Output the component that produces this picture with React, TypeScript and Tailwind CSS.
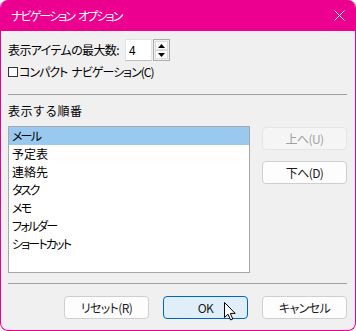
import React from 'react';

const items = ['メール', '予定表', '連絡先', 'タスク', 'メモ', 'フォルダー', 'ショートカット'];

const font = "font-['Noto_Sans_CJK_JP','Noto_Sans',sans-serif]";
const kana = "[font-feature-settings:'palt']";

const Cursor = () => (
  <svg width="13" height="19" viewBox="0 0 13 19" className="absolute left-[60px] top-[5px]">
    <path
      d="M0.5 0.5 L0.5 15.5 L4 12.2 L6.6 18 L8.8 17 L6.3 11.4 L11.2 11.4 Z"
      fill="#fff"
      stroke="#000"
      strokeWidth="1"
      strokeLinejoin="round"
    />
  </svg>
);

const Spinner = () => (
  <div className="ml-[1px] flex h-[22px] w-[17px] flex-col border border-[#adadad] bg-[#f0f0f0] p-[1px]">
    <div className="flex flex-1 items-center justify-center border border-[#dcdcdc] bg-[#fdfdfd]">
      <svg width="7" height="4" viewBox="0 0 7 4">
        <path d="M0 4 L3.5 0 L7 4 Z" fill="#000" />
      </svg>
    </div>
    <div className="flex flex-1 items-center justify-center border border-[#dcdcdc] bg-[#fdfdfd]">
      <svg width="7" height="4" viewBox="0 0 7 4">
        <path d="M0 0 L7 0 L3.5 4 Z" fill="#000" />
      </svg>
    </div>
  </div>
);

const Btn = ({
  label,
  disabled,
  primary,
  children,
}: {
  label: string;
  disabled?: boolean;
  primary?: boolean;
  children?: React.ReactNode;
}) => (
  <div
    className={
      'relative flex h-[23px] w-[85px] items-center justify-center rounded-[4px] border text-[12px] ' +
      (primary
        ? 'border-[#0067c0] bg-[#e0eef9] text-[#1a1a1a]'
        : disabled
          ? 'border-[#e5e5e5] bg-[#f5f5f5] text-[#a0a0a0]'
          : 'border-[#cfcfcf] bg-[#fdfdfd] text-[#1a1a1a]')
    }
  >
    <span className={kana + ' tracking-[-0.6px]'}>{label}</span>
    {children}
  </div>
);

export default function App() {
  return (
    <div className={'h-[331px] w-[356px] bg-white ' + font}>
      <div className="flex h-full flex-col overflow-hidden rounded-[8px] border border-t-0 border-[#ec008f] bg-[#f0f0f0]">
        <div className="flex h-[31px] shrink-0 items-center justify-between bg-[#ec008f] pl-[10px] pr-[10px] text-[12px] text-white">
          <div className={kana + ' flex gap-[4px] tracking-[-1.9px]'}>
            <span>ナビゲーション</span>
            <span>オプション</span>
          </div>
          <svg width="11" height="11" viewBox="0 0 11 11">
            <path d="M0.5 0.5 L10.5 10.5 M10.5 0.5 L0.5 10.5" stroke="#fff" strokeWidth="1" />
          </svg>
        </div>

        <div className="flex flex-1 flex-col pl-[7px] pr-[8px] text-[12px] text-black">
          <div className="mt-[8px] flex h-[22px] items-center">
            <span className={kana + ' w-[117px] shrink-0 whitespace-nowrap tracking-[-0.6px]'}>
              表示アイテムの最大数:
            </span>
            <div className="flex h-[22px] w-[27px] items-center border border-[#e3e3e3] border-b-[#bdbdbd] bg-white pl-[3px]">
              4
            </div>
            <Spinner />
          </div>

          <div className="mt-[4px] flex h-[14px] items-center">
            <div className="h-[10px] w-[10px] border border-[#333] bg-white" />
            <div className={kana + ' ml-[1px] flex gap-[4px] whitespace-nowrap tracking-[-1px]'}>
              <span>コンパクト</span>
              <span>ナビゲーション(C)</span>
            </div>
          </div>

          <div className="mt-[15px] h-px bg-[#a0a0a0]" />

          <div className="mt-[8px] h-[16px] leading-[16px] tracking-[0.4px]">表示する順番</div>

          <div className="mt-[7px] flex">
            <div className="h-[147px] w-[242px] border border-[#a8a8a8] bg-white">
              {items.map((it, i) => (
                <div
                  key={it}
                  className={
                    'flex h-[18px] items-center pl-[3px] ' + (i === 0 ? 'bg-[#99c9ef]' : '')
                  }
                >
                  <span className={i === 1 || i === 2 ? '' : kana + ' tracking-[-1.8px]'}>{it}</span>
                </div>
              ))}
            </div>
            <div className="ml-[12px] mt-[1px] flex flex-col gap-[11px]">
              <Btn label="上へ(U)" disabled />
              <Btn label="下へ(D)" />
            </div>
          </div>

          <div className="mt-[10px] h-px bg-[#a0a0a0]" />

          <div className="mt-[12px] flex justify-end gap-[14px]">
            <Btn label="リセット(R)" />
            <Btn label="OK" primary>
              <Cursor />
            </Btn>
            <Btn label="キャンセル" />
          </div>
        </div>
      </div>
    </div>
  );
}
